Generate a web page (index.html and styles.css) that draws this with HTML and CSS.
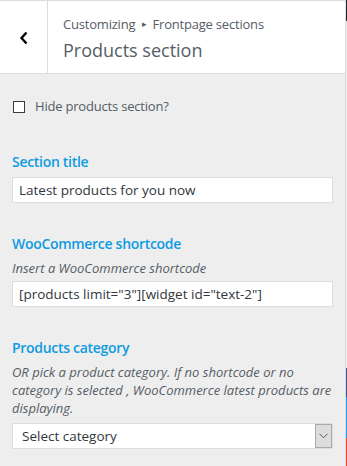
FILE: index.html
```html
<!DOCTYPE html>
<html lang="en">
<head>
  <meta charset="UTF-8">
  <meta name="viewport" content="width=device-width, initial-scale=1.0">
  <title>Products section</title>
  <link rel="stylesheet" href="styles.css">
</head>
<body>

  <div class="panel">
    <section class="header">
      <button class="back" aria-label="Back">
        <svg width="10" height="14" viewBox="0 0 10 14"><path d="M7.5 1.5 L2.5 7 L7.5 12.5" fill="none" stroke="#000" stroke-width="2.4"/></svg>
      </button>
      <div class="titles">
        <p class="crumbs">Customizing <span class="sep">&#9656;</span> Frontpage sections</p>
        <h1>Products section</h1>
      </div>
    </section>

    <div class="controls">
      <label class="check">
        <span class="box"></span>
        Hide products section?
      </label>

      <div class="control first">
        <h2>Section title</h2>
        <div class="field">Latest products for you now</div>
      </div>

      <div class="control">
        <h2>WooCommerce shortcode</h2>
        <p class="desc">Insert a WooCommerce shortcode</p>
        <div class="field">[products limit="3"][widget id="text-2"]</div>
      </div>

      <div class="control">
        <h2>Products category</h2>
        <p class="desc">OR pick a product category. If no shortcode or no category is selected , WooCommerce latest products are displaying.</p>
        <div class="select">
          <span>Select category</span>
          <span class="arrow">
            <svg width="9" height="6" viewBox="0 0 9 6"><path d="M0.5 0.8 L4.5 4.8 L8.5 0.8" fill="none" stroke="#555" stroke-width="1"/></svg>
          </span>
        </div>
      </div>
    </div>
  </div>

  <div class="edge">
    <span class="dark"></span>
    <span class="gap"></span>
    <span class="navy"></span>
    <span class="sky"></span>
    <span class="red"></span>
  </div>

</body>
</html>
```

FILE: styles.css
```css
body {
  font-family: 'Open Sans', sans-serif;
  background: #eee;
  color: #555d66;
  margin: 0;
  padding: 0;
  display: flex;
  height: 466px;
  overflow: hidden;
}

.panel {
  width: 345px;
  border-right: 1px solid #ddd;
  background: #eee;
}

.header {
  display: flex;
  height: 74px;
  box-sizing: border-box;
  background: #fff;
  border-top: 1px solid #ddd;
  border-bottom: 1px solid #ddd;
}

.back {
  width: 48px;
  border: none;
  border-right: 1px solid #ddd;
  background: #fff;
  display: flex;
  align-items: center;
  justify-content: center;
  padding: 2px 0 0 1px;
}

.titles {
  padding: 13px 0 0 15px;
}

.crumbs {
  margin: 0;
  font-size: 13px;
  line-height: 20px;
  letter-spacing: -0.2px;
}

.crumbs .sep {
  font-size: 9px;
  vertical-align: 2px;
  padding: 0 3px;
}

.header h1 {
  margin: 3px 0 0;
  font-size: 18px;
  font-weight: 400;
  line-height: 26px;
}

.controls {
  padding: 24px 12px 0 12px;
}

.check {
  display: flex;
  align-items: center;
  height: 17px;
  font-size: 13px;
  line-height: 17px;
  letter-spacing: -0.2px;
}

.check .box {
  width: 10px;
  height: 10px;
  border: 1.5px solid #3a3a3a;
  margin: 0 10px 0 1px;
  background: #fff;
}

.control {
  margin-top: 32px;
}

.control.first {
  margin-top: 38px;
}

.control h2 {
  margin: 0 0 6px;
  font-size: 14px;
  font-weight: 600;
  color: #0e9be1;
  line-height: 18px;
  letter-spacing: -0.3px;
}

.desc {
  margin: 0 0 4px;
  font-size: 13px;
  font-style: italic;
  line-height: 18px;
}

.field,
.select {
  height: 26px;
  box-sizing: border-box;
  background: #fff;
  border: 1px solid #ddd;
  font-size: 13.5px;
  color: #32373c;
  padding: 3px 6px;
  line-height: 18px;
}

.select {
  display: flex;
  justify-content: space-between;
  align-items: center;
  margin-top: 6px;
  padding: 0 0 0 9px;
}

.select .arrow {
  width: 15px;
  height: 22px;
  background: #ddd;
  border: 1px solid #aaa;
  display: flex;
  align-items: center;
  justify-content: center;
}

.edge {
  width: 1px;
  display: flex;
  flex-direction: column;
}

.edge .dark { height: 21px; background: #23282d; }
.edge .gap { height: 347px; background: #eee; }
.edge .navy { height: 29px; background: #3e4f8a; }
.edge .sky { height: 41px; background: #1ea0f0; }
.edge .red { height: 28px; background: #e4502f; }
```
